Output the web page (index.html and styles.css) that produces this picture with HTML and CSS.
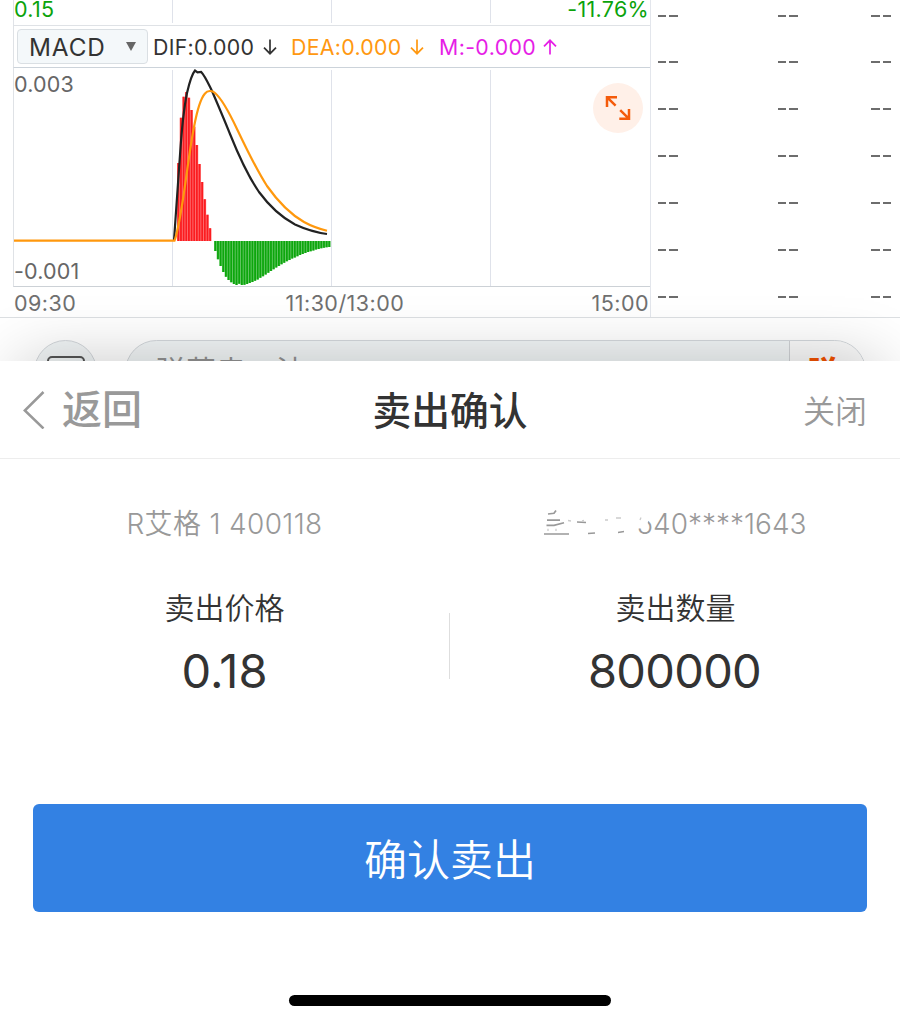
FILE: index.html
```html
<!DOCTYPE html>
<html lang="zh-CN">
<head>
<meta charset="utf-8">
<title>卖出确认</title>
<link rel="stylesheet" href="styles.css">
</head>
<body>
<div class="screen">
  <main class="market">
    <div class="panels">
      <section class="chart">
        <div class="price-row">
          <svg class="grid" viewBox="0 0 636 24"><path d="M158.5 0V23M317.5 0V23M476.5 0V23"/></svg>
          <span class="low">0.15</span><span class="change">-11.76%</span>
        </div>
        <div class="indicator">
          <button class="picker">MACD<i class="caret"></i></button>
          <span class="dif">DIF:0.000</span>
          <svg class="arrow dark" viewBox="0 0 14 16"><path d="M7 .5V14.5M1 8.7L7 14.7L13 8.7"/></svg>
          <span class="dea">DEA:0.000</span>
          <svg class="arrow amber" viewBox="0 0 14 16"><path d="M7 .5V14.5M1 8.7L7 14.7L13 8.7"/></svg>
          <span class="macd">M:-0.000</span>
          <svg class="arrow pink" viewBox="0 0 14 16"><path d="M7 15.5V1.5M1 7.3L7 1.3L13 7.3"/></svg>
        </div>
        <div class="plot">
          <svg class="curves" viewBox="14 68 636 218">
            <path class="gridline" d="M172.5 70V286M331.5 70V286M490.5 70V286"/>
            <defs>
              <path id="up" d="M.5 0v-78M1.5 0v-123.3M2.5 0v-144.3M3.5 0v-149M4.5 0v-143.3M5.5 0v-131M6.5 0v-114.3M7.5 0v-96M8.5 0v-77M9.5 0v-59M10.5 0v-41.7M11.5 0v-26.3M12.5 0v-12.7"/>
              <path id="down" d="M.5 0v10M1.5 0v18.3M2.5 0v25M3.5 0v31M4.5 0v35.7M5.5 0v39M6.5 0v41.3M7.5 0v43M8.5 0v44M9.5 0v42.7M10.5 0v44M11.5 0v43.8M12.5 0v43M13.5 0v42M14.5 0v41M15.5 0v39.8M16.5 0v38.4M17.5 0v36.8M18.5 0v35.2M19.5 0v33.4M20.5 0v31.7M21.5 0v30M22.5 0v28.3M23.5 0v26.6M24.5 0v25M25.5 0v23.3M26.5 0v21.7M27.5 0v20.2M28.5 0v18.9M29.5 0v17.6M30.5 0v16.4M31.5 0v15.2M32.5 0v14.1M33.5 0v13M34.5 0v12M35.5 0v11.1M36.5 0v10.2M37.5 0v9.4M38.5 0v8.6M39.5 0v7.9M40.5 0v7.3M41.5 0v6.7M42.5 0v6.3M43.5 0v6"/>
            </defs>
            <g class="up" transform="translate(177 241) scale(2.65 1)"><use href="#up" class="soft"/><use href="#up" class="solid"/></g>
            <g class="down" transform="translate(214 241) scale(2.65 1)"><use href="#down" class="soft"/><use href="#down" class="solid"/></g>
            <path class="line-dif" d="M174 240.5C176 215 178 180 180 155C182 125 184.500 105 187 93C190 80 192 74 195 70.500L197.500 72.300L201 71.800C205 76 208 83 212 91C218 105 224 119 230 134C238 154 248 176 259 192C270 207 281 217 295 224.500C307 230 316 232.500 327 234"/>
            <path class="line-dea" d="M14 240.700H174.500C177 234 180 218 183 199C187 173 190 147 194 127C197 111 201 98 205 93.500C207.500 90.500 212 90 215 93C222 99 229 112 237 129C247 150 256 169 267 186C279 203 290 214 304 222C313 227 320 229 327 230.800"/>
          </svg>
          <span class="max">0.003</span><span class="min">-0.001</span>
          <svg class="expand" viewBox="0 0 50 50"><circle cx="25" cy="25" r="25"/><path d="M14 24V14.200H24M14.200 14.400L22.600 22.600M26.300 35.800H36V26M35.800 35.600L27.200 27.200"/></svg>
        </div>
        <div class="axis"><span>09:30</span><span class="noon">11:30/13:00</span><span>15:00</span></div>
      </section>
      <section class="trades">
        <div><i></i><i></i><i></i></div>
        <div><i></i><i></i><i></i></div>
        <div><i></i><i></i><i></i></div>
        <div><i></i><i></i><i></i></div>
        <div><i></i><i></i><i></i></div>
        <div><i></i><i></i><i></i></div>
        <div><i></i><i></i><i></i></div>
      </section>
    </div>
    <div class="comment-bar">
      <div class="round"><svg viewBox="0 0 38 30"><rect x="1" y="1" width="36" height="28" rx="4"/></svg></div>
      <div class="comment"><span class="hint">弹幕走一波</span><span class="send">弹</span></div>
    </div>
  </main>
  <section class="sheet">
    <header class="head">
      <a class="back"><svg viewBox="0 0 22 38"><path d="M20.500 1L1.800 19.500L20.500 37.500"/></svg><span>返回</span></a>
      <h1>卖出确认</h1>
      <a class="close">关闭</a>
    </header>
    <div class="details">
      <div class="detail">
        <p class="account"><span class="stock">R艾格 1 400118</span></p>
        <p class="label">卖出价格</p>
        <p class="value price">0.18</p>
      </div>
      <i class="divider"></i>
      <div class="detail">
        <p class="account holder">
          <svg class="smudge" viewBox="540 505 112 36">
            <path class="cover" d="M634 505H654V516L649 517L647.500 524L643 527L634 525Z"/>
            <path class="marks" d="M548 514L554 513.300L556 510.500M547 520.200H560M546.500 525.300H554L564 522.800M544 534H569M577 522L586 522.500M588 533.500L595 533M618 532.500L624 531.500"/>
            <path class="faint" d="M548 528.800V531M556 528.800V531M568 520.500L571 521M582 521L584 520.500M605 520H608M616 518H621M641 517.500L640 520"/>
          </svg>
          <span class="number">540****1643</span>
        </p>
        <p class="label">卖出数量</p>
        <p class="value amount">800000</p>
      </div>
    </div>
    <button class="confirm">确认卖出</button>
    <i class="home"></i>
  </section>
</div>
</body>
</html>
```

FILE: styles.css
```css
* { box-sizing: border-box; }
body {
  margin: 0;
  background: #fff;
  font-family: Inter, "Noto Sans CJK SC", sans-serif;
  color: #333;
}
button { border: 0; font-family: inherit; color: inherit; }
svg { display: block; fill: none; flex: none; }
p, h1 { margin: 0; }
.screen { width: 900px; height: 1024px; overflow: hidden; display: flex; flex-direction: column; }

/* Market view behind the sheet */
.market { height: 361px; overflow: hidden; flex: none; }
.panels { display: flex; height: 318px; border-bottom: 1px solid #dcdfe2; }
.chart { width: 651px; padding-left: 13px; border-right: 1px solid #e3e6ec; }
.price-row {
  position: relative;
  height: 25px;
  display: flex;
  justify-content: space-between;
  border-left: 1px solid #e0e3e8;
  font-size: 21.5px;
  line-height: 19px;
  letter-spacing: .3px;
  color: #0ba30b;
}
.price-row .grid { position: absolute; left: 0; top: 0; width: 636px; height: 24px; stroke: #dfe2ea; }
.change { margin-right: 1px; }
.indicator {
  height: 43px;
  display: flex;
  align-items: center;
  padding-left: 3px;
  border: solid #dfe2e6;
  border-width: 1px 0 1px 1px;
  border-bottom-color: #ccd3da;
  font-size: 21.3px;
  white-space: nowrap;
}
.picker {
  width: 131px;
  height: 35px;
  padding: 0 11px 0 11px;
  display: flex;
  align-items: center;
  justify-content: space-between;
  background: #f4f8fa;
  border: 1px solid #dadfe3;
  border-radius: 4px;
  font-size: 24.3px;
  letter-spacing: .9px;
}
.caret { border: 5.5px solid transparent; border-top: 9px solid #666; border-bottom: 0; }
.dif { margin-left: 5px; width: 103px; letter-spacing: .3px; }
.dea { margin-left: 14px; width: 112px; letter-spacing: .3px; color: #ff9810; }
.macd { margin-left: 15px; width: 97px; letter-spacing: .4px; color: #e61ee6; }
.arrow { width: 14px; height: 16px; margin-left: 7px; stroke-width: 1.700; }
.arrow.dark { stroke: #333; }
.arrow.amber { stroke: #ff9810; }
.arrow.pink { stroke: #e61ee6; }
.plot {
  position: relative;
  height: 219px;
  display: flex;
  flex-direction: column;
  justify-content: space-between;
  padding: 3px 0 2px;
  border: solid #dfe2e6;
  border-width: 0 0 1px 1px;
  border-bottom-color: #ccd1d6;
  font-size: 21.5px;
  line-height: 26px;
  letter-spacing: .15px;
  color: #666;
}
.curves { position: absolute; left: 0; top: 0; width: 636px; height: 218px; }
.max, .min { position: relative; }
.gridline { stroke: #dfe2ea; }
.up { stroke: #fb1c20; }
.down { stroke: #0da60d; }
.soft { stroke-width: 1; opacity: .6; }
.solid { stroke-width: .68; }
.line-dif { stroke: #222; stroke-width: 2.200; }
.line-dea { stroke: #ff980d; stroke-width: 2.200; }
.expand { position: absolute; right: 7px; top: 15px; width: 50px; height: 50px; }
.expand circle { fill: #fff0e8; }
.expand path { stroke: #f45b0b; stroke-width: 2.500; }
.axis {
  display: flex;
  justify-content: space-between;
  padding: 0 1px;
  font-size: 21.5px;
  line-height: 33px;
  height: 30px;
  letter-spacing: .45px;
  color: #707070;
}
.noon { margin-left: 22px; }
.trades { flex: 1; display: flex; flex-direction: column; gap: 44.9px; padding: 14.5px 9px 0 7px; }
.trades div { display: flex; justify-content: space-between; }
.trades i { width: 20px; height: 2px; background: linear-gradient(90deg, #6d6d6d 8.500px, transparent 8.500px 11.500px, #6d6d6d 11.500px); }
.trades i:nth-child(2) { margin-left: 27px; }
.comment-bar { display: flex; gap: 28px; padding: 22px 34px 0; }
.round {
  width: 63px;
  height: 63px;
  padding: 15px 0 0 12px;
  border: 1px solid #d3d7db;
  border-radius: 50%;
  background: #f1f5f6;
}
.round svg { width: 38px; stroke: #555; stroke-width: 2; }
.comment {
  flex: 1;
  display: flex;
  height: 63px;
  overflow: hidden;
  border: 1px solid #d3d7db;
  border-radius: 32px;
  background: #f1f5f6;
  font-size: 30px;
  line-height: 60px;
}
.hint { flex: 1; padding-left: 30px; color: #929292; }
.send { width: 76px; padding-left: 18px; border-left: 1px solid #cfd2d5; background: #fafafa; color: #f35200; font-weight: 900; }

/* Confirmation sheet */
.sheet {
  position: relative;
  height: 663px;
  display: flex;
  flex-direction: column;
  align-items: center;
  background: #fff;
  box-shadow: 0 -20px 60px -20px rgba(0, 0, 0, .22);
}
.head {
  width: 100%;
  height: 98px;
  display: grid;
  grid-template-columns: 1fr auto 1fr;
  align-items: center;
  padding: 0 33px 0 23px;
  border-bottom: 1px solid #ededed;
}
.back { display: flex; align-items: center; gap: 17px; font-size: 40px; font-weight: 500; line-height: 60px; color: #999; }
.back span { padding-top: 1px; }
.back svg { width: 22px; height: 38px; stroke: #999; stroke-width: 2.500; }
.head h1 { padding-top: 2px; font-size: 38.8px; line-height: 60px; font-weight: 500; margin: 0 -5px 0 5px; }
.close { justify-self: end; padding-top: 4px; font-size: 32px; font-weight: 350; line-height: 60px; color: #999; }
.details { width: 100%; display: flex; height: 344px; padding-top: 44px; }
.detail { flex: 1; display: flex; flex-direction: column; align-items: center; }
.account { height: 40px; display: flex; justify-content: center; font-size: 28px; line-height: 42px; font-weight: 350; color: #999; white-space: pre; }
.stock { letter-spacing: .35px; }
.holder { position: relative; width: 262px; justify-content: flex-end; }
.smudge { position: absolute; left: -5px; top: 2px; width: 112px; height: 36px; z-index: 1; }
.cover { fill: #fff; }
.marks { stroke: #999; stroke-width: 1.700; }
.faint { stroke: #ccc; stroke-width: 1.300; }
.label { margin-top: 43px; font-size: 30px; line-height: 45px; height: 44px; font-weight: 350; }
.value { margin-top: 11px; font-size: 47px; line-height: 60px; }
.amount { letter-spacing: -.7px; margin-left: -2px; }
.divider { width: 1px; height: 66px; margin: 110px 1px 0 0; background: #dedede; }
.confirm {
  width: 834px;
  height: 108px;
  margin-top: 1px;
  padding-bottom: 4px;
  flex: none;
  background: #3381e3;
  border-radius: 6px;
  color: #fff;
  font-size: 43px;
  font-weight: 350;
}
.home { width: 322px; height: 11px; margin-top: 83px; background: #000; border-radius: 6px; }
```
